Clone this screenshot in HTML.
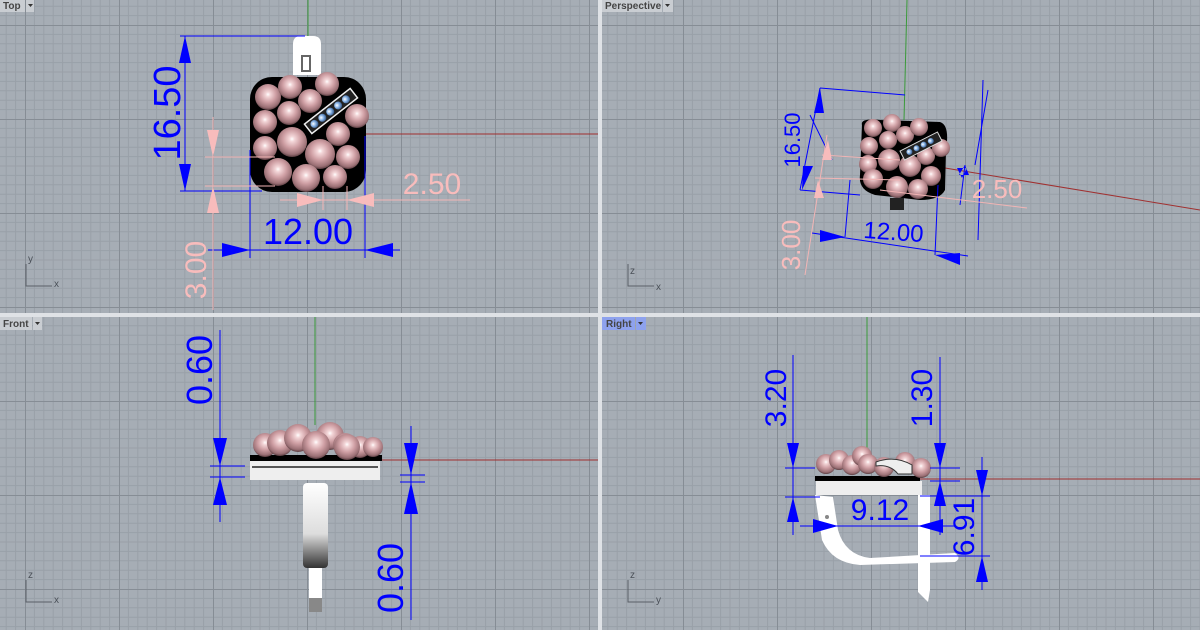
<!DOCTYPE html><html><head><style>body{margin:0;width:1200px;height:630px;overflow:hidden;background:#dfe2e6}svg{display:block}text{font-family:"Liberation Sans",sans-serif}</style></head><body>
<svg width="1200" height="630" viewBox="0 0 1200 630" xmlns="http://www.w3.org/2000/svg">
<defs>
<pattern id="g" x="25" y="25" width="94" height="94" patternUnits="userSpaceOnUse">
<rect width="94" height="94" fill="#a6adb5"/>
<g stroke="#99a0a8" stroke-width="1">
<path d="M9.4 0V94M18.8 0V94M28.2 0V94M37.6 0V94M47 0V94M56.4 0V94M65.8 0V94M75.2 0V94M84.6 0V94M0 9.4H94M0 18.8H94M0 28.2H94M0 37.6H94M0 47H94M0 56.4H94M0 65.8H94M0 75.2H94M0 84.6H94"/></g>
<path d="M0.5 0V94M0 0.5H94" stroke="#868d95" stroke-width="1"/>
</pattern>
<radialGradient id="p" cx="0.5" cy="0.4" r="0.6"><stop offset="0" stop-color="#fff"/><stop offset="0.15" stop-color="#f3d6d8"/><stop offset="0.5" stop-color="#cf9fa4"/><stop offset="0.85" stop-color="#9a6f74"/><stop offset="1" stop-color="#5a3d41"/></radialGradient>
<radialGradient id="b" cx="0.4" cy="0.4" r="0.6"><stop offset="0" stop-color="#fff"/><stop offset="0.5" stop-color="#8ab4e6"/><stop offset="1" stop-color="#3a5f90"/></radialGradient>
<linearGradient id="st" x1="0" y1="0" x2="0" y2="1"><stop offset="0" stop-color="#fff"/><stop offset="0.6" stop-color="#ddd"/><stop offset="1" stop-color="#333"/></linearGradient>
</defs>
<rect x="0" y="0" width="598" height="313" fill="url(#g)"/>
<rect x="602" y="0" width="598" height="313" fill="url(#g)"/>
<rect x="0" y="317" width="598" height="313" fill="url(#g)"/>
<rect x="602" y="317" width="598" height="313" fill="url(#g)"/>

<g font-size="10" font-weight="bold" fill="#444">
<rect x="0" y="0" width="25" height="12" fill="#c9cdd2"/><text x="3" y="9">Top</text><rect x="26" y="0" width="8" height="12" fill="#c9cdd2"/><path d="M28 4h5l-2.5 3z" fill="#333"/>
<rect x="602" y="0" width="60" height="12" fill="#c9cdd2"/><text x="605" y="9">Perspective</text><rect x="663" y="0" width="10" height="12" fill="#c9cdd2"/><path d="M665 4h5l-2.5 3z" fill="#333"/>
<rect x="0" y="317" width="32" height="13" fill="#c9cdd2"/><text x="3" y="327">Front</text><rect x="33" y="317" width="9" height="13" fill="#c9cdd2"/><path d="M35 322h5l-2.5 3z" fill="#333"/>
<rect x="602" y="317" width="33" height="13" fill="#8ea2ee"/><text x="606" y="327">Right</text><rect x="636" y="317" width="10" height="13" fill="#8ea2ee"/><path d="M638 322h5l-2.5 3z" fill="#333"/>
</g>
<g stroke="#5a6068" fill="none" stroke-width="1"><path d="M26 264V286H52"/><path d="M628 264V286H654"/><path d="M26 580V602H52"/><path d="M628 580V602H654"/></g>
<g font-size="10" fill="#4a5058"><text x="28" y="262">y</text><text x="54" y="287">x</text><text x="630" y="578">z</text><text x="656" y="603">y</text><text x="28" y="578">z</text><text x="54" y="603">x</text><text x="630" y="274">z</text><text x="656" y="290">x</text></g>

<!-- TOP VIEW -->
<path d="M308 0V36" stroke="#3a9a3a"/><path d="M365 134H598" stroke="#a03030"/>
<rect x="250" y="77" width="116" height="115" rx="22" fill="#000"/>
<path d="M293 75V44q0-8 8-8h12q8 0 8 8V75z" fill="#fff"/><rect x="301" y="55" width="10" height="17" fill="#666"/><rect x="303" y="57" width="6" height="13" fill="#fff"/>
<g fill="url(#p)">
<circle cx="268" cy="97" r="13"/><circle cx="290" cy="87" r="12"/><circle cx="327" cy="84" r="12"/><circle cx="310" cy="101" r="12"/><circle cx="289" cy="113" r="12"/><circle cx="265" cy="122" r="12"/><circle cx="357" cy="116" r="12"/><circle cx="338" cy="134" r="12"/><circle cx="265" cy="148" r="12"/><circle cx="292" cy="142" r="15"/><circle cx="320" cy="154" r="15"/><circle cx="348" cy="157" r="12"/><circle cx="278" cy="172" r="14"/><circle cx="306" cy="178" r="14"/><circle cx="335" cy="177" r="12"/></g>
<g transform="rotate(-38 331 111)"><rect x="302" y="105" width="58" height="12" fill="#222" stroke="#eee" stroke-width="1.5"/><g fill="url(#b)"><circle cx="310" cy="111" r="4"/><circle cx="320" cy="111" r="4"/><circle cx="330" cy="111" r="4"/><circle cx="340" cy="111" r="4"/><circle cx="350" cy="111" r="4"/></g></g>
<g stroke="#0000ff" stroke-width="1" fill="none"><path d="M185 36V191M180 36H305M180 191H262M250 150V258M365 136V258M208 250H400"/></g>
<g fill="#0000ff"><path d="M185 36l-6 27h12z M185 191l-6-27h12z M250 250l-28-7v14z M365 250l28-7v14z"/>
<text transform="translate(180 113) rotate(-90)" font-size="38" text-anchor="middle">16.50</text>
<text x="308" y="244" font-size="36" text-anchor="middle">12.00</text></g>
<g stroke="#f2b5b5" stroke-width="1" fill="none"><path d="M213 117V310M205 157H275M205 186H275M280 200H470M323 186V210M347 186V210"/></g>
<g fill="#f8bcbc"><path d="M213 157l-6-27h12z M213 186l-6 27h12z M323 200l-26-7v14z M347 200l27-7v14z"/>
<text x="432" y="194" font-size="30" text-anchor="middle">2.50</text>
<text transform="translate(206 270) rotate(-90)" font-size="30" text-anchor="middle">3.00</text></g>

<!-- PERSPECTIVE -->
<path d="M907 0L904 120" stroke="#3a9a3a"/><path d="M945 168L1200 210" stroke="#a03030"/>
<path d="M862 125Q860 118 880 120L940 122Q950 125 946 150L945 190Q940 200 920 200L875 195Q858 190 860 175z" fill="#000"/>
<rect x="890" y="198" width="14" height="12" fill="#222"/>
<g fill="url(#p)"><circle cx="873" cy="128" r="9"/><circle cx="892" cy="123" r="9"/><circle cx="905" cy="135" r="9"/><circle cx="919" cy="127" r="9"/><circle cx="869" cy="146" r="9"/><circle cx="888" cy="140" r="9"/><circle cx="889" cy="160" r="11"/><circle cx="868" cy="164" r="9"/><circle cx="910" cy="166" r="11"/><circle cx="926" cy="156" r="9"/><circle cx="941" cy="148" r="9"/><circle cx="931" cy="176" r="10"/><circle cx="873" cy="179" r="10"/><circle cx="897" cy="187" r="11"/><circle cx="918" cy="189" r="10"/></g>
<g transform="rotate(-27 921 146)"><rect x="900" y="141" width="42" height="10" fill="#222" stroke="#ddd"/><g fill="url(#b)"><circle cx="908" cy="146" r="3"/><circle cx="916" cy="146" r="3"/><circle cx="924" cy="146" r="3"/><circle cx="932" cy="146" r="3"/></g></g>
<g stroke="#0000ff" fill="none"><path d="M820 88L800 190M820 88L905 95M800 190L860 195M850 180L845 237M938 185L935 255M812 233L968 256M965 165L960 205M983 80L978 240M988 90L975 165M810 115L832 160"/></g>
<g fill="#0000ff"><path d="M820 88l-6 25h10z M802 190l1-24h10z M845 237l-25-7v12z M935 255l25-2v12z M965 165l-6 10h10z M962 178l-5-10h10z"/>
<text transform="translate(800 140) rotate(-90)" font-size="22" text-anchor="middle">16.50</text>
<text x="893" y="240" font-size="24" text-anchor="middle" transform="rotate(4 893 240)">12.00</text></g>
<g stroke="#f2b5b5" fill="none"><path d="M827 135L805 275M822 155L900 160M815 178L900 180M880 190L1027 208"/></g>
<g fill="#f8bcbc"><path d="M828 140l-6 20h10z M818 180l-4 18h10z"/>
<text x="997" y="198" font-size="26" text-anchor="middle">2.50</text>
<text transform="translate(800 245) rotate(-90)" font-size="26" text-anchor="middle">3.00</text></g>

<!-- FRONT -->
<path d="M315 317V425" stroke="#3a9a3a"/><path d="M380 460H598" stroke="#a03030"/>
<rect x="250" y="461" width="130" height="19" fill="#eee"/><rect x="252" y="466" width="126" height="2" fill="#555"/><rect x="250" y="455" width="132" height="6" fill="#000"/>
<rect x="303" y="483" width="25" height="85" rx="4" fill="url(#st)"/>
<rect x="309" y="568" width="13" height="32" fill="#fff"/><rect x="309" y="598" width="13" height="14" fill="#888"/>
<g fill="url(#p)"><circle cx="265" cy="445" r="12"/><circle cx="280" cy="443" r="13"/><circle cx="298" cy="438" r="14"/><circle cx="330" cy="436" r="14"/><circle cx="345" cy="445" r="12"/><circle cx="360" cy="447" r="11"/><circle cx="373" cy="447" r="10"/><circle cx="316" cy="445" r="14"/><circle cx="347" cy="447" r="13"/></g>
<g stroke="#0000ff" fill="none"><path d="M220 330V522M210 466H245M210 477H245M411 426V620M400 475H425M400 482H425"/></g>
<g fill="#0000ff"><path d="M220 466l-7-28h14z M220 477l-7 28h14z M411 475l-7-32h14z M411 482l-7 32h14z"/>
<text transform="translate(212 370) rotate(-90)" font-size="36" text-anchor="middle">0.60</text>
<text transform="translate(403 578) rotate(-90)" font-size="36" text-anchor="middle">0.60</text></g>

<!-- RIGHT -->
<path d="M867 317V452" stroke="#3a9a3a"/><path d="M920 479H1200" stroke="#a03030"/>
<rect x="815" y="476" width="105" height="5" fill="#000"/><rect x="816" y="481" width="106" height="14" fill="#eee"/>
<path d="M815 495L822 540Q832 563 860 565L955 562Q962 558 955 553L870 558Q845 555 838 530L833 497z" fill="#fff"/>
<path d="M918 495H930V590L928 602L918 592z" fill="#fff"/>
<circle cx="827" cy="517" r="2" fill="#888"/>
<g fill="url(#p)"><circle cx="826" cy="464" r="10"/><circle cx="839" cy="460" r="10"/><circle cx="852" cy="465" r="10"/><circle cx="862" cy="456" r="10"/><circle cx="868" cy="464" r="10"/><circle cx="884" cy="467" r="10"/><circle cx="905" cy="462" r="10"/><circle cx="921" cy="468" r="10"/></g>
<path d="M876 462Q895 455 912 465V474H898Q890 464 876 466z" fill="#eee" stroke="#333"/>
<g stroke="#0000ff" fill="none"><path d="M793 355V535M785 468H815M785 497H820M940 357V535M930 468H960M930 481H960M800 526H955M982 457V590M920 496H990M920 556H990"/></g>
<g fill="#0000ff"><path d="M793 468l-6-25h12z M793 497l-6 25h12z M940 468l-6-25h12z M940 481l-6 25h12z M838 526l-25-7v14z M918 526l25-7v14z M982 496l-6-26h12z M982 556l-6 26h12z"/>
<text transform="translate(786 398) rotate(-90)" font-size="30" text-anchor="middle">3.20</text>
<text transform="translate(932 398) rotate(-90)" font-size="30" text-anchor="middle">1.30</text>
<text x="880" y="520" font-size="30" text-anchor="middle">9.12</text>
<text transform="translate(974 527) rotate(-90)" font-size="30" text-anchor="middle">6.91</text></g>
</svg></body></html>
